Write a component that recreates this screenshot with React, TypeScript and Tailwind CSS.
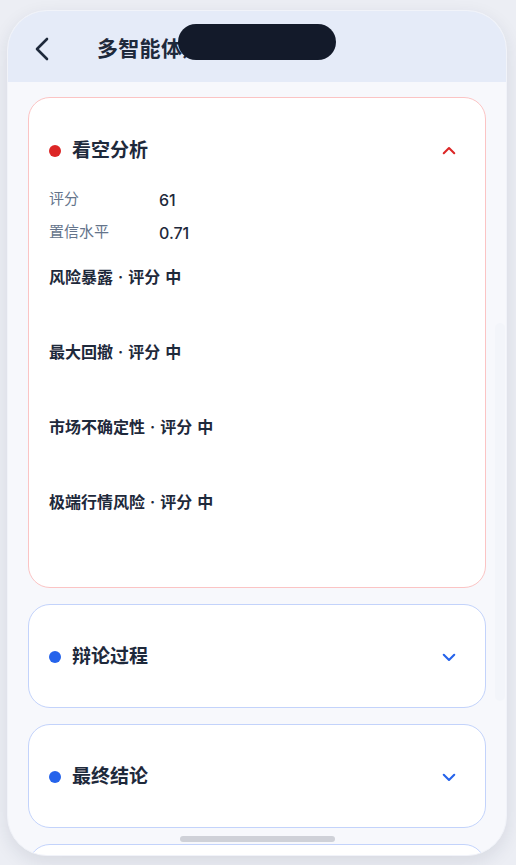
import React from "react";

const font = { fontFamily: 'Inter, "Noto Sans CJK SC", "Noto Sans", sans-serif' };

function Chevron({ up, color }: { up?: boolean; color: string }) {
  return (
    <svg width="18" height="18" viewBox="0 0 24 24" fill="none" stroke={color} strokeWidth="2.8" strokeLinecap="round" strokeLinejoin="round">
      {up ? <path d="M5 15l7-7 7 7" /> : <path d="M5 9l7 7 7-7" />}
    </svg>
  );
}

const items = ["风险暴露 · 评分 中", "最大回撤 · 评分 中", "市场不确定性 · 评分 中", "极端行情风险 · 评分 中"];

export default function App() {
  return (
    <div className="w-[516px] h-[865px] bg-[#eceef4] overflow-hidden pt-[10px] pl-[7px]" style={font}>
      <div className="relative w-[500px] h-[846px] rounded-[40px] overflow-hidden bg-[#f7f8fc] border border-[#f1f3f9] shadow-[0_6px_18px_rgba(30,40,70,0.10)] flex flex-col">
        <div className="h-[71px] shrink-0 bg-[#e5ebf8] flex items-center pl-[24px] gap-[43px] pt-[4px]">
          <svg width="22" height="24" viewBox="0 0 22 24" fill="none" stroke="#1e293b" strokeWidth="2.6" strokeLinecap="round" strokeLinejoin="round">
            <path d="M15 2L5 12l10 10" />
          </svg>
          <span className="text-[21px] font-bold text-[#1e293b] tracking-[0.3px]">多智能体辩论</span>
        </div>
        <div className="absolute top-[13px] left-[170px] w-[158px] h-[36px] rounded-full bg-[#131a2a]" />
        <div className="flex-1 flex flex-col gap-[16px] px-[20px] pt-[15px]">
          <div className="bg-white border border-[#fbc4c4] rounded-[22px] px-[20px] pt-[22px] pb-[23px]">
            <div className="h-[62px] flex items-center">
              <span className="w-[12px] h-[12px] rounded-full bg-[#dc2626] mr-[11px]" />
              <span className="text-[19px] font-semibold text-[#1e293b]">看空分析</span>
              <span className="ml-auto mr-[7px] flex"><Chevron up color="#dc2626" /></span>
            </div>
            <div className="flex flex-col">
              <div className="h-[33px] flex items-center pt-[2px]">
                <span className="w-[110px] text-[15px] text-[#64748b]">评分</span>
                <span className="text-[16px] font-medium text-[#1e293b]">61</span>
              </div>
              <div className="h-[33px] flex items-center pt-[2px]">
                <span className="w-[110px] text-[15px] text-[#64748b]">置信水平</span>
                <span className="text-[16px] font-medium text-[#1e293b]">0.71</span>
              </div>
            </div>
            <div className="flex flex-col mt-[16px]">
              {items.map((t) => (
                <div key={t} className="h-[75px]">
                  <div className="h-[26px] flex items-center text-[16px] font-semibold text-[#1e293b] [word-spacing:1px]">{t}</div>
                </div>
              ))}
            </div>
          </div>
          {["辩论过程", "最终结论", ""].map((t, i) => (
            <div key={i} className="bg-white border border-[#c3d3fb] rounded-[22px] px-[20px] py-[20px] shrink-0">
              <div className="h-[62px] flex items-center pt-[2px]">
                <span className="w-[12px] h-[12px] rounded-full bg-[#2563eb] mr-[11px]" />
                <span className="text-[19px] font-semibold text-[#1e293b]">{t}</span>
                <span className="ml-auto mr-[7px] flex"><Chevron color="#2563eb" /></span>
              </div>
            </div>
          ))}
        </div>
        <div className="absolute right-[1px] top-[312px] w-[10px] h-[378px] rounded-full bg-[#f3f5fa]" />
        <div className="absolute bottom-[13px] left-[172px] w-[155px] h-[6px] rounded-full bg-[#cfd1d8]" />
      </div>
    </div>
  );
}
